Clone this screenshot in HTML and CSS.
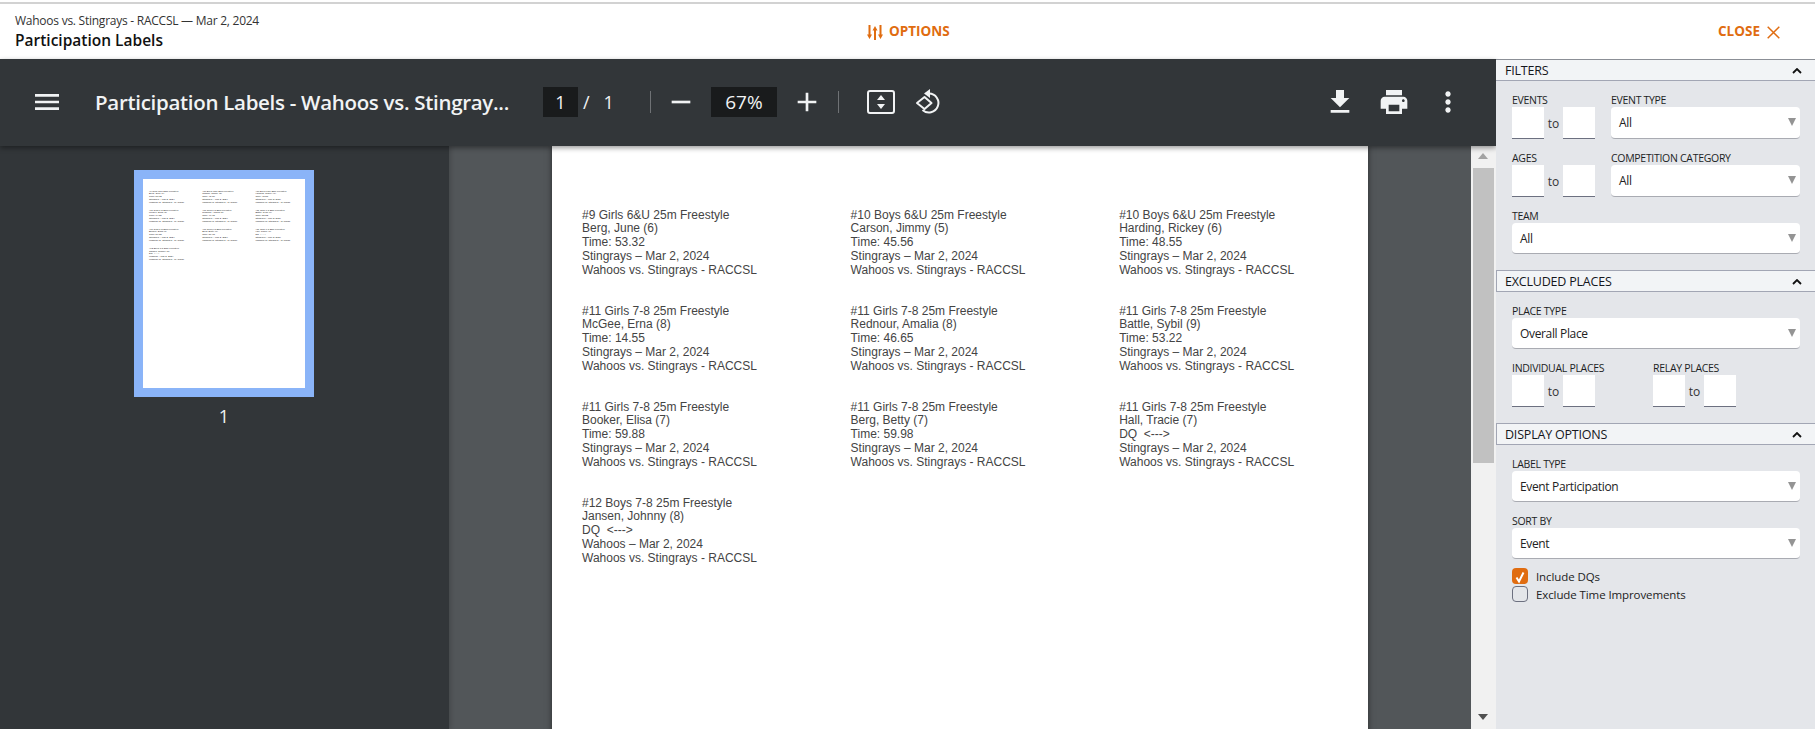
FILE: index.html
```html
<!DOCTYPE html>
<html lang="en">
<head>
    <meta charset="UTF-8">
    <title>Participation Labels</title>
    <link rel="stylesheet" href="styles.css">
</head>
<body>
    <div class="topbar">
        <div class="topbar-title">
            <div class="meet-name">Wahoos vs. Stingrays - RACCSL — Mar 2, 2024</div>
            <div class="report-name">Participation Labels</div>
        </div>
        <div class="topbar-options">
            <svg class="options-icon" viewBox="0 0 16 15" width="16" height="15">
                <path d="M2.500 0v10M8 5v10M13.500 0v10" fill="none" stroke="#e06c10" stroke-width="2"/>
                <path d="M0 9.500h5L2.500 14zM5.500 5.500h5L8 1zM11 9.500h5L13.500 14z" fill="#e06c10"/>
            </svg>
            <span>OPTIONS</span>
        </div>
        <div class="topbar-close">
            <span>CLOSE</span>
            <svg viewBox="0 0 13 13" width="13" height="13">
                <path d="M.7.7l11.600 11.600M12.300.7L.7 12.300" fill="none" stroke="#e06c10" stroke-width="1.500"/>
            </svg>
        </div>
    </div>

    <div class="main">
        <div class="viewer">
            <div class="toolbar">
                <svg class="icon-menu" viewBox="0 0 24 24" width="32" height="32"><path d="M3 18h18v-2H3v2zm0-5h18v-2H3v2zm0-7v2h18V6H3z"/></svg>
                <div class="doc-title">Participation Labels - Wahoos vs. Stingray...</div>
                <div class="page-box">1</div>
                <span class="page-slash">/</span>
                <span class="page-total">1</span>
                <div class="tb-sep sep-first"></div>
                <svg class="icon-zoom-out" viewBox="0 0 24 24" width="32" height="32"><path d="M19 13H5v-2h14v2z"/></svg>
                <div class="zoom-box">67%</div>
                <svg class="icon-zoom-in" viewBox="0 0 24 24" width="32" height="32"><path d="M19 13h-6v6h-2v-6H5v-2h6V5h2v6h6v2z"/></svg>
                <div class="tb-sep sep-second"></div>
                <svg class="icon-fit" viewBox="0 0 28 24" width="28" height="24">
                    <rect x="1" y="1" width="26" height="22" rx="2" fill="none" stroke="#f1f3f4" stroke-width="2"/>
                    <path d="M14 5l4 5h-8zM14 19l4-5h-8z" fill="#f1f3f4"/>
                </svg>
                <svg class="icon-rotate" viewBox="0 0 28 26" width="28" height="26">
                    <path d="M9.500 8L16.500 14 9.500 20 2 14z" fill="none" stroke="#f1f3f4" stroke-width="2" stroke-linejoin="round"/>
                    <path d="M14 4.500a9.500 9.500 0 1 1-6.500 16.500" fill="none" stroke="#f1f3f4" stroke-width="2"/>
                    <path d="M15 0v9l-6-4.500z" fill="#f1f3f4"/>
                </svg>
                <div class="toolbar-right">
                    <svg viewBox="0 0 24 24" width="32" height="32"><path d="M19 9h-4V3H9v6H5l7 7 7-7zM5 18v2h14v-2H5z"/></svg>
                    <svg viewBox="0 0 24 24" width="32" height="32"><path d="M19 8H5c-1.660 0-3 1.340-3 3v6h4v4h12v-4h4v-6c0-1.660-1.340-3-3-3zm-3 11H8v-5h8v5zm3-7c-.55 0-1-.45-1-1s.45-1 1-1 1 .45 1 1-.45 1-1 1zm-1-9H6v4h12V3z"/></svg>
                    <svg viewBox="0 0 24 24" width="32" height="32"><path d="M12 8c1.100 0 2-.9 2-2s-.9-2-2-2-2 .9-2 2 .9 2 2 2zm0 2c-1.100 0-2 .9-2 2s.9 2 2 2 2-.9 2-2-.9-2-2-2zm0 6c-1.100 0-2 .9-2 2s.9 2 2 2 2-.9 2-2-.9-2-2-2z"/></svg>
                </div>
            </div>
            <div class="viewer-body">
                <div class="thumbs">
                    <div class="thumb">
                        <div class="labels">
                            <div class="label">#9 Girls 6&amp;U 25m Freestyle<br>Berg, June (6)<br>Time: 53.32<br>Stingrays – Mar 2, 2024<br>Wahoos vs. Stingrays - RACCSL</div>
                            <div class="label">#10 Boys 6&amp;U 25m Freestyle<br>Carson, Jimmy (5)<br>Time: 45.56<br>Stingrays – Mar 2, 2024<br>Wahoos vs. Stingrays - RACCSL</div>
                            <div class="label">#10 Boys 6&amp;U 25m Freestyle<br>Harding, Rickey (6)<br>Time: 48.55<br>Stingrays – Mar 2, 2024<br>Wahoos vs. Stingrays - RACCSL</div>
                            <div class="label">#11 Girls 7-8 25m Freestyle<br>McGee, Erna (8)<br>Time: 14.55<br>Stingrays – Mar 2, 2024<br>Wahoos vs. Stingrays - RACCSL</div>
                            <div class="label">#11 Girls 7-8 25m Freestyle<br>Rednour, Amalia (8)<br>Time: 46.65<br>Stingrays – Mar 2, 2024<br>Wahoos vs. Stingrays - RACCSL</div>
                            <div class="label">#11 Girls 7-8 25m Freestyle<br>Battle, Sybil (9)<br>Time: 53.22<br>Stingrays – Mar 2, 2024<br>Wahoos vs. Stingrays - RACCSL</div>
                            <div class="label">#11 Girls 7-8 25m Freestyle<br>Booker, Elisa (7)<br>Time: 59.88<br>Stingrays – Mar 2, 2024<br>Wahoos vs. Stingrays - RACCSL</div>
                            <div class="label">#11 Girls 7-8 25m Freestyle<br>Berg, Betty (7)<br>Time: 59.98<br>Stingrays – Mar 2, 2024<br>Wahoos vs. Stingrays - RACCSL</div>
                            <div class="label">#11 Girls 7-8 25m Freestyle<br>Hall, Tracie (7)<br>DQ &nbsp;&lt;---&gt;<br>Stingrays – Mar 2, 2024<br>Wahoos vs. Stingrays - RACCSL</div>
                            <div class="label">#12 Boys 7-8 25m Freestyle<br>Jansen, Johnny (8)<br>DQ &nbsp;&lt;---&gt;<br>Wahoos – Mar 2, 2024<br>Wahoos vs. Stingrays - RACCSL</div>
                        </div>
                    </div>
                    <div class="thumb-num">1</div>
                </div>
                <div class="doc-area">
                    <div class="page">
                        <div class="labels">
                            <div class="label">#9 Girls 6&amp;U 25m Freestyle<br>Berg, June (6)<br>Time: 53.32<br>Stingrays – Mar 2, 2024<br>Wahoos vs. Stingrays - RACCSL</div>
                            <div class="label">#10 Boys 6&amp;U 25m Freestyle<br>Carson, Jimmy (5)<br>Time: 45.56<br>Stingrays – Mar 2, 2024<br>Wahoos vs. Stingrays - RACCSL</div>
                            <div class="label">#10 Boys 6&amp;U 25m Freestyle<br>Harding, Rickey (6)<br>Time: 48.55<br>Stingrays – Mar 2, 2024<br>Wahoos vs. Stingrays - RACCSL</div>
                            <div class="label">#11 Girls 7-8 25m Freestyle<br>McGee, Erna (8)<br>Time: 14.55<br>Stingrays – Mar 2, 2024<br>Wahoos vs. Stingrays - RACCSL</div>
                            <div class="label">#11 Girls 7-8 25m Freestyle<br>Rednour, Amalia (8)<br>Time: 46.65<br>Stingrays – Mar 2, 2024<br>Wahoos vs. Stingrays - RACCSL</div>
                            <div class="label">#11 Girls 7-8 25m Freestyle<br>Battle, Sybil (9)<br>Time: 53.22<br>Stingrays – Mar 2, 2024<br>Wahoos vs. Stingrays - RACCSL</div>
                            <div class="label">#11 Girls 7-8 25m Freestyle<br>Booker, Elisa (7)<br>Time: 59.88<br>Stingrays – Mar 2, 2024<br>Wahoos vs. Stingrays - RACCSL</div>
                            <div class="label">#11 Girls 7-8 25m Freestyle<br>Berg, Betty (7)<br>Time: 59.98<br>Stingrays – Mar 2, 2024<br>Wahoos vs. Stingrays - RACCSL</div>
                            <div class="label">#11 Girls 7-8 25m Freestyle<br>Hall, Tracie (7)<br>DQ &nbsp;&lt;---&gt;<br>Stingrays – Mar 2, 2024<br>Wahoos vs. Stingrays - RACCSL</div>
                            <div class="label">#12 Boys 7-8 25m Freestyle<br>Jansen, Johnny (8)<br>DQ &nbsp;&lt;---&gt;<br>Wahoos – Mar 2, 2024<br>Wahoos vs. Stingrays - RACCSL</div>
                        </div>
                    </div>
                </div>
                <div class="scrollbar">
                    <div class="arrow-up"></div>
                    <div class="scroll-thumb"></div>
                    <div class="arrow-down"></div>
                </div>
            </div>
        </div>

        <div class="panel">
            <div class="section-head head-first">FILTERS<svg class="chevron" viewBox="0 0 10 6" width="10" height="6"><path d="M1 5l4-4 4 4" fill="none" stroke="#111" stroke-width="1.800"/></svg></div>
            <div class="section filters">
                <div class="field-row">
                    <div class="field">
                        <div class="field-label">EVENTS</div>
                        <div class="range"><div class="num"></div><span>to</span><div class="num"></div></div>
                    </div>
                    <div class="field grow">
                        <div class="field-label">EVENT TYPE</div>
                        <div class="select tall">All</div>
                    </div>
                </div>
                <div class="field-row">
                    <div class="field">
                        <div class="field-label">AGES</div>
                        <div class="range"><div class="num"></div><span>to</span><div class="num"></div></div>
                    </div>
                    <div class="field grow">
                        <div class="field-label">COMPETITION CATEGORY</div>
                        <div class="select tall">All</div>
                    </div>
                </div>
                <div class="field">
                    <div class="field-label">TEAM</div>
                    <div class="select">All</div>
                </div>
            </div>

            <div class="section-head">EXCLUDED PLACES<svg class="chevron" viewBox="0 0 10 6" width="10" height="6"><path d="M1 5l4-4 4 4" fill="none" stroke="#111" stroke-width="1.800"/></svg></div>
            <div class="section excluded">
                <div class="field">
                    <div class="field-label">PLACE TYPE</div>
                    <div class="select">Overall Place</div>
                </div>
                <div class="field-row places">
                    <div class="field">
                        <div class="field-label">INDIVIDUAL PLACES</div>
                        <div class="range"><div class="num"></div><span>to</span><div class="num"></div></div>
                    </div>
                    <div class="field">
                        <div class="field-label">RELAY PLACES</div>
                        <div class="range"><div class="num"></div><span>to</span><div class="num"></div></div>
                    </div>
                </div>
            </div>

            <div class="section-head">DISPLAY OPTIONS<svg class="chevron" viewBox="0 0 10 6" width="10" height="6"><path d="M1 5l4-4 4 4" fill="none" stroke="#111" stroke-width="1.800"/></svg></div>
            <div class="section display">
                <div class="field">
                    <div class="field-label">LABEL TYPE</div>
                    <div class="select">Event Participation</div>
                </div>
                <div class="field">
                    <div class="field-label">SORT BY</div>
                    <div class="select">Event</div>
                </div>
                <div class="checks">
                    <div class="check-row">
                        <div class="check on"><svg viewBox="0 0 16 16" width="16" height="16"><path d="M4.500 9.500l2.500 4 4.500-9" fill="none" stroke="#fff" stroke-width="2"/></svg></div>
                        <span>Include DQs</span>
                    </div>
                    <div class="check-row">
                        <div class="check"></div>
                        <span>Exclude Time Improvements</span>
                    </div>
                </div>
            </div>
        </div>
    </div>
</body>
</html>
```

FILE: styles.css
```css
*{
    box-sizing: border-box;
}
html,body{
    margin: 0;
    height: 729px;
    overflow: hidden;
}
body{
    display: flex;
    flex-direction: column;
    font-family: "Open Sans", "Noto Sans", sans-serif;
    background: #fff;
}

/* top white bar */
.topbar{
    height: 57px;
    margin-top: 2px;
    border-top: 2px solid #d2d2d2;
    display: flex;
    align-items: flex-start;
    flex: none;
}
.topbar-title{
    padding: 9px 0 0 15px;
    width: 867px;
}
.meet-name{
    font-size: 12px;
    line-height: 16px;
    letter-spacing: -0.25px;
    color: #333;
}
.report-name{
    font-size: 15.500px;
    line-height: 20px;
    margin-top: 1px;
    font-weight: 600;
    color: #111;
}
.topbar-options{
    display: flex;
    align-items: center;
    gap: 6px;
    padding-top: 18px;
    color: #e06c10;
    font-size: 13.500px;
    font-weight: 700;
}
.options-icon{
    margin-top: 3px;
}
.topbar-close{
    margin-left: auto;
    margin-right: 35px;
    display: flex;
    align-items: center;
    gap: 7px;
    padding-top: 18px;
    color: #e06c10;
    font-size: 13.500px;
    font-weight: 700;
}
.topbar-close svg{
    margin-top: 3px;
}

.main{
    flex: 1;
    display: flex;
    min-height: 0;
}

/* pdf viewer */
.viewer{
    width: 1496px;
    display: flex;
    flex-direction: column;
}
.toolbar{
    height: 87px;
    background: #323639;
    display: flex;
    align-items: center;
    color: #f1f3f4;
    flex: none;
    box-shadow: 0 2px 5px rgba(0,0,0,.4);
    position: relative;
    z-index: 2;
    padding-bottom: 1px;
}
.toolbar svg{
    fill: #f1f3f4;
    flex: none;
}
.icon-menu{
    margin-left: 31px;
}
.doc-title{
    font-size: 20.500px;
    font-weight: 600;
    letter-spacing: -0.3px;
    margin-left: 32px;
    width: 448px;
    white-space: nowrap;
}
.page-box{
    width: 35px;
    height: 30px;
    background: #191b1c;
    text-align: center;
    font-size: 18px;
    line-height: 30px;
}
.page-slash{
    font-size: 18px;
    margin-left: 5px;
}
.page-total{
    font-size: 18px;
    margin-left: 14px;
}
.tb-sep{
    width: 1px;
    height: 22px;
    background: #6f7275;
}
.sep-first{
    margin-left: 36px;
}
.icon-zoom-out{
    margin-left: 14px;
}
.zoom-box{
    width: 66px;
    height: 30px;
    background: #191b1c;
    text-align: center;
    font-size: 19px;
    line-height: 30px;
    margin-left: 14px;
}
.icon-zoom-in{
    margin-left: 14px;
}
.sep-second{
    margin-left: 15px;
}
.icon-fit{
    margin-left: 28px;
}
.icon-rotate{
    margin-left: 20px;
}
.toolbar-right{
    margin-left: auto;
    display: flex;
    gap: 22px;
    padding-right: 32px;
}

.viewer-body{
    flex: 1;
    display: flex;
    min-height: 0;
}
.thumbs{
    width: 449px;
    background: #323639;
    padding: 24px 0 0 134px;
    flex: none;
    box-shadow: 2px 0 4px rgba(0,0,0,.15);
    position: relative;
}
.thumb{
    width: 180px;
    height: 227px;
    border: 9px solid #8ab4f8;
    background: #fff;
    padding: 11.500px 0 0 6px;
    overflow: hidden;
}
.thumb .labels{
    grid-template-columns: repeat(3, 53.200px);
    grid-auto-rows: 19.100px;
    font-size: 2.420px;
    line-height: 2.750px;
    color: #222;
}
.thumb-num{
    width: 180px;
    text-align: center;
    color: #f1f3f4;
    font-size: 18px;
    line-height: 22px;
    margin-top: 8px;
}
.doc-area{
    flex: 1;
    background: #525659;
    padding-left: 103px;
    overflow: hidden;
}
.page{
    width: 816px;
    height: 800px;
    background: #fff;
    padding: 62.500px 0 0 30px;
    box-shadow: 0 0 6px rgba(0,0,0,.5);
}
.labels{
    display: grid;
    grid-template-columns: repeat(3, 268.600px);
    grid-auto-rows: 96px;
    font-family: "Liberation Sans", Arial, sans-serif;
    font-size: 12px;
    line-height: 13.800px;
    color: #444;
    white-space: nowrap;
}
.scrollbar{
    width: 25px;
    background: #f1f1f1;
    position: relative;
    padding-left: 2px;
    flex: none;
}
.arrow-up,.arrow-down{
    position: absolute;
    left: 7px;
    width: 0;
    height: 0;
    border-left: 5.500px solid transparent;
    border-right: 5.500px solid transparent;
}
.arrow-up{
    top: 7px;
    border-bottom: 6px solid #a3a3a3;
}
.arrow-down{
    top: 568px;
    border-top: 6px solid #505050;
}
.scroll-thumb{
    width: 21px;
    height: 295px;
    margin-top: 22px;
    background: #c1c1c1;
}

/* right options panel */
.panel{
    flex: 1;
    background: #e4e6ea;
    position: relative;
    z-index: 3;
}
.section-head{
    height: 22px;
    background: #f2f4f6;
    border: 1px solid #a2a6b4;
    border-right: none;
    padding: 1px 0 0 8px;
    font-size: 12.500px;
    line-height: 20px;
    letter-spacing: -0.2px;
    color: #15171c;
    display: flex;
    align-items: center;
    justify-content: space-between;
}
.head-first{
    border-left: none;
    border-top: 1px solid #8b8f96;
    padding-left: 9px;
}
.chevron{
    margin-right: 13px;
}
.section{
    padding: 12px 15px 0 16px;
}
.filters{
    height: 189px;
}
.excluded{
    height: 131px;
}
.field-row{
    display: flex;
    gap: 16px;
    margin-bottom: 12px;
}
.field.grow{
    flex: 1;
}
.field-label{
    font-size: 10.500px;
    line-height: 14px;
    letter-spacing: -0.3px;
    font-weight: 500;
    color: #1c1e24;
    white-space: nowrap;
}
.range{
    display: flex;
    align-items: flex-end;
    width: 83px;
    font-size: 12px;
    color: #333;
}
.range span{
    width: 19px;
    text-align: center;
    line-height: 30px;
}
.num{
    width: 32px;
    height: 32px;
    background: #fff;
    border-bottom: 1px solid #6c7080;
}
.select{
    height: 31px;
    background: #fff;
    border-radius: 4px;
    border-bottom: 1px solid #a9abb2;
    padding-left: 8px;
    font-size: 12px;
    letter-spacing: -0.35px;
    line-height: 31px;
    color: #222;
    position: relative;
}
.select.tall{
    height: 32px;
}
.select:after{
    content: "";
    position: absolute;
    right: 4px;
    top: 11px;
    border-left: 4px solid transparent;
    border-right: 4px solid transparent;
    border-top: 8px solid #949494;
}
.places{
    margin-top: 12px;
    gap: 58px;
}
.places .field{
    width: 83px;
}
.display .field{
    margin-bottom: 12px;
}
.checks{
    margin-top: -4px;
    font-size: 11.500px;
    letter-spacing: -0.1px;
    color: #222;
}
.check-row{
    display: flex;
    align-items: center;
    height: 18px;
    gap: 8px;
}
.check{
    width: 16px;
    height: 16px;
    border: 1px solid #6c7080;
    border-radius: 4px;
    flex: none;
}
.check.on{
    background: #e06c10;
    border: none;
}
.check svg{
    display: block;
}
```
